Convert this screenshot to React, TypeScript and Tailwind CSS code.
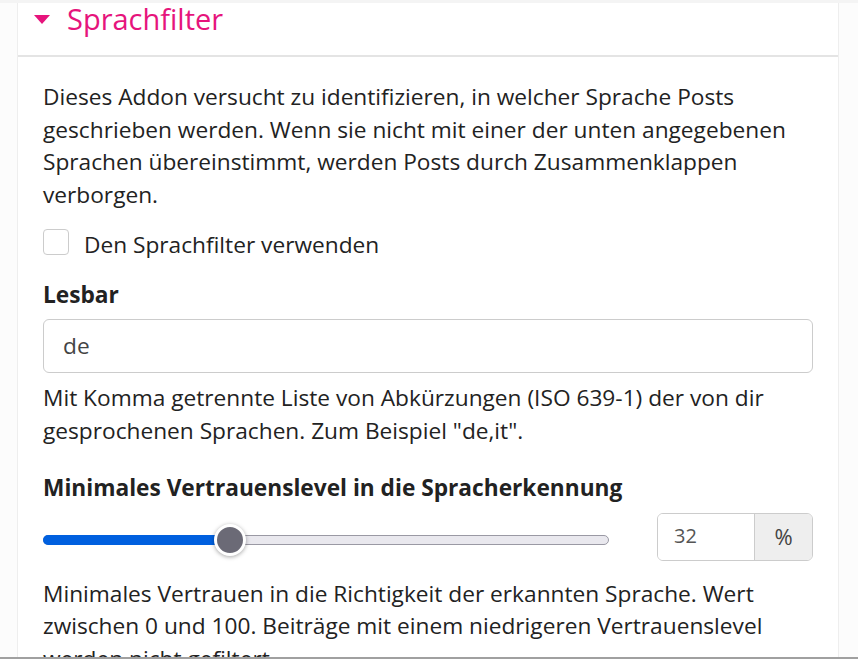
import React from 'react';

export default function App() {
  const value = 32;
  // thumb sits inside the track like a native range input
  const thumbLeft = `calc(16px + (100% - 32px) * ${value / 100})`;

  return (
    <div
      className="h-[659px] w-full flex flex-col overflow-hidden bg-[#fcfcfc] text-[#222]"
      style={{ fontFamily: '"Open Sans", sans-serif' }}
    >
      <div className="flex-1 overflow-hidden border-t-[3px] border-[#f4f4f4]">
        <div className="ml-[17px] mr-[19px] h-full bg-white border-x border-[#eee]">
          <div className="h-[54px] flex items-center border-b-2 border-[#e4e4e4] pl-[16px] pb-[21px]">
            <svg width="16" height="9" viewBox="0 0 16 9" className="mr-[17px] mt-[2px]">
              <path d="M0 0 L16 0 L8 9 Z" fill="#e6147c" />
            </svg>
            <h3 className="text-[29px] leading-none text-[#e6147c]">Sprachfilter</h3>
          </div>

          <div className="px-[25px] pt-[24px] text-[22.7px] leading-[32.5px]">
            <p>
              Dieses Addon versucht zu identifizieren, in welcher Sprache Posts
              geschrieben werden. Wenn sie nicht mit einer der unten angegebenen
              Sprachen übereinstimmt, werden Posts durch Zusammenklappen
              verborgen.
            </p>

            <label className="mt-[18px] flex items-start">
              <span className="w-[26px] h-[26px] rounded-[4px] border border-[#ccc] bg-white mr-[15px]" />
              <span>Den Sprachfilter verwenden</span>
            </label>

            <div className="mt-[17px] font-bold">Lesbar</div>
            <div className="mt-[8px] h-[54px] rounded-[6px] border border-[#ccc] flex items-center px-[19px] text-[#444]">
              de
            </div>
            <p className="mt-[9px]">
              Mit Komma getrennte Liste von Abkürzungen (ISO 639-1) der von dir
              gesprochenen Sprachen. Zum Beispiel "de,it".
            </p>

            <div className="mt-[25px] font-bold">
              Minimales Vertrauenslevel in die Spracherkennung
            </div>
            <div className="mt-[8px] flex items-center">
              <div className="relative mt-[6px] w-[566px] h-[10px] rounded-full bg-[#e9e8ee] border border-[#9a99a4]">
                <div
                  className="absolute left-[-1px] top-[-1px] h-[10px] rounded-l-full bg-[#0060df]"
                  style={{ width: thumbLeft }}
                />
                <div
                  className="absolute top-1/2 w-[32px] h-[32px] -translate-x-1/2 -translate-y-1/2 rounded-full bg-[#6b6a76] border-[3px] border-white shadow-[0_1px_4px_rgba(0,0,0,0.35)]"
                  style={{ left: thumbLeft }}
                />
              </div>
              <div className="ml-auto flex h-[48px] w-[156px] rounded-[6px] border border-[#ccc] overflow-hidden">
                <div className="flex-1 flex items-center pl-[16px] text-[20px] text-[#555] bg-white">
                  {value}
                </div>
                <div className="w-[58px] flex items-center justify-center border-l border-[#ccc] bg-[#eee] text-[22px] text-[#444]">
                  %
                </div>
              </div>
            </div>
            <p className="mt-[17px]">
              Minimales Vertrauen in die Richtigkeit der erkannten Sprache. Wert
              zwischen 0 und 100. Beiträge mit einem niedrigeren Vertrauenslevel
              werden nicht gefiltert.
            </p>
          </div>
        </div>
      </div>
      <div className="h-[2px] bg-[#a0a0a0]" />
    </div>
  );
}
